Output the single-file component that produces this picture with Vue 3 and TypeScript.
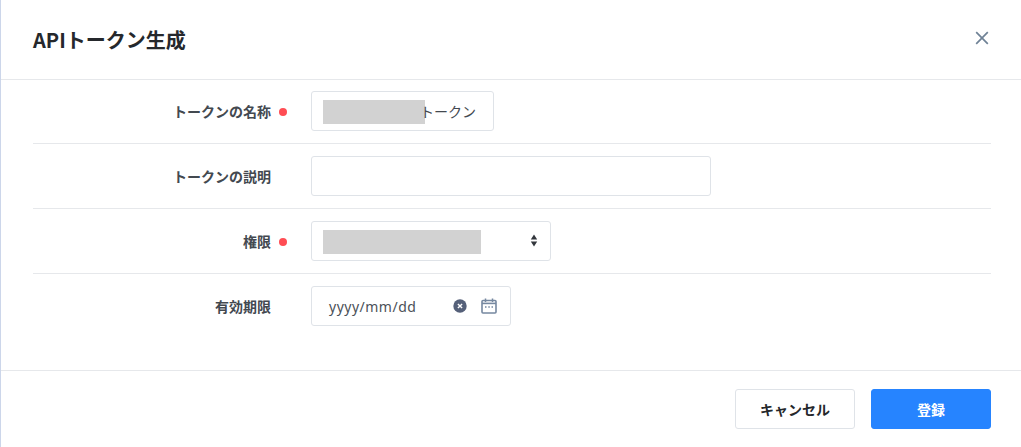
<script setup lang="ts">
interface Row { label: string; required: boolean; kind: string }
const rows: Row[] = [
  { label: 'トークンの名称', required: true, kind: 'name' },
  { label: 'トークンの説明', required: false, kind: 'desc' },
  { label: '権限', required: true, kind: 'select' },
  { label: '有効期限', required: false, kind: 'date' },
]
</script>

<template>
  <div class="modal">
    <header class="head">
      <h1 class="title">APIトークン生成</h1>
      <svg class="close" width="14" height="14" viewBox="0 0 14 14" aria-label="閉じる">
        <path d="M1.2 1.2 12.8 12.8M12.8 1.2 1.2 12.8" stroke="#6f8296" stroke-width="1.7" fill="none" />
      </svg>
    </header>
    <main class="body">
      <div v-for="r in rows" :key="r.kind" class="row">
        <div class="label">
          <span>{{ r.label }}</span>
          <i class="dot" :class="{ off: !r.required }"></i>
        </div>
        <div v-if="r.kind === 'name'" class="field name">
          <span class="redact w102"></span><span class="val">トークン</span>
        </div>
        <div v-else-if="r.kind === 'desc'" class="field desc"></div>
        <div v-else-if="r.kind === 'select'" class="field select">
          <span class="redact w158"></span>
          <svg class="updown" width="8" height="13" viewBox="0 0 8 13">
            <path d="M4 0.5 7.2 5.5H.8zM4 12.5 .8 7.5h6.4z" fill="#33373d" />
          </svg>
        </div>
        <div v-else class="field date">
          <span class="ph">yyyy/mm/dd</span>
          <svg class="clear" width="14" height="14" viewBox="0 0 14 14">
            <circle cx="7" cy="7" r="6.7" fill="#556079" />
            <path d="M4.9 4.9 9.1 9.1M9.1 4.9 4.9 9.1" stroke="#fff" stroke-width="1.4" />
          </svg>
          <svg class="cal" width="16" height="16" viewBox="0 0 16 16">
            <rect x="1" y="2.5" width="14" height="12.5" rx="1" fill="none" stroke="#7688a0" stroke-width="1.6" />
            <path d="M1 5.4h14" stroke="#7688a0" stroke-width="1.6" />
            <path d="M4.5 .5v3.5M11.5 .5v3.5" stroke="#7688a0" stroke-width="1.5" />
            <path d="M4 9h1.5M7.3 9h1.5M10.5 9H12" stroke="#7688a0" stroke-width="1.3" />
          </svg>
        </div>
      </div>
    </main>
    <footer class="foot">
      <button class="btn ghost" type="button">キャンセル</button>
      <button class="btn primary" type="button">登録</button>
    </footer>
  </div>
</template>

<style>
html, body { margin: 0; background: #fff; }
</style>

<style scoped>
.modal {
  width: 1021px;
  height: 447px;
  box-sizing: border-box;
  border-left: 1px solid #ccd6ea;
  display: flex;
  flex-direction: column;
  font-family: "Noto Sans CJK JP", "Noto Sans", sans-serif;
  color: #3a4048;
  overflow: hidden;
}
.head {
  height: 80px;
  box-sizing: border-box;
  border-bottom: 1px solid #e6e8eb;
  padding: 0 32px;
  display: flex;
  align-items: center;
  justify-content: space-between;
}
.title {
  margin: 0;
  font-size: 20px;
  font-weight: 700;
  line-height: 28px;
  color: #25282c;
}
.close { margin-top: -3px; }
.body {
  height: 291px;
  box-sizing: border-box;
  padding: 0 30px 0 32px;
  border-bottom: 1px solid #e6e8eb;
}
.row {
  display: flex;
  align-items: center;
  height: 65px;
  box-sizing: border-box;
  padding: 12px 0;
  border-bottom: 1px solid #e6e8eb;
}
.row:first-child { height: 64px; padding-top: 11px; }
.row:last-child { height: 64px; border-bottom: 0; }
.label {
  width: 278px;
  flex: none;
  display: flex;
  align-items: center;
  justify-content: flex-end;
  font-size: 14px;
  font-weight: 700;
  color: #434950;
  line-height: 20px;
}
.dot {
  width: 8px;
  height: 8px;
  border-radius: 50%;
  background: #ff4d54;
  margin: 2px 24px 0 8px;
}
.dot.off { background: transparent; }
.field {
  height: 40px;
  box-sizing: border-box;
  border: 1px solid #dfe3e8;
  border-radius: 3px;
  display: flex;
  align-items: center;
  padding-left: 11px;
  font-size: 14px;
  color: #434950;
}
.name { width: 183px; }
.desc { width: 400px; }
.select { width: 240px; justify-content: space-between; padding-right: 12px; }
.updown { margin-top: -2px; }
.date { width: 200px; padding-left: 17px; }
.redact { display: block; height: 24px; margin-top: 2px; background: #d2d2d2; flex: none; }
.w102 { width: 102px; }
.w158 { width: 158px; }
.val { margin-left: -5px; }
.ph { font-family: "Noto Sans", sans-serif; font-size: 14px; width: 119px; flex: none; letter-spacing: 0.5px; color: #4b5158; }
.clear { margin-left: 5px; margin-right: 14px; flex: none; }
.cal { flex: none; }
.foot {
  flex: 1;
  display: flex;
  justify-content: flex-end;
  gap: 16px;
  padding: 18px 30px 0 0;
}
.btn {
  width: 120px;
  height: 40px;
  border-radius: 3px;
  font-family: inherit;
  font-size: 14px;
  font-weight: 700;
  padding: 0;
}
.ghost { background: #fff; border: 1px solid #dfe3e8; color: #25282c; }
.primary { background: #2684ff; border: 1px solid #2684ff; color: #fff; }
</style>
